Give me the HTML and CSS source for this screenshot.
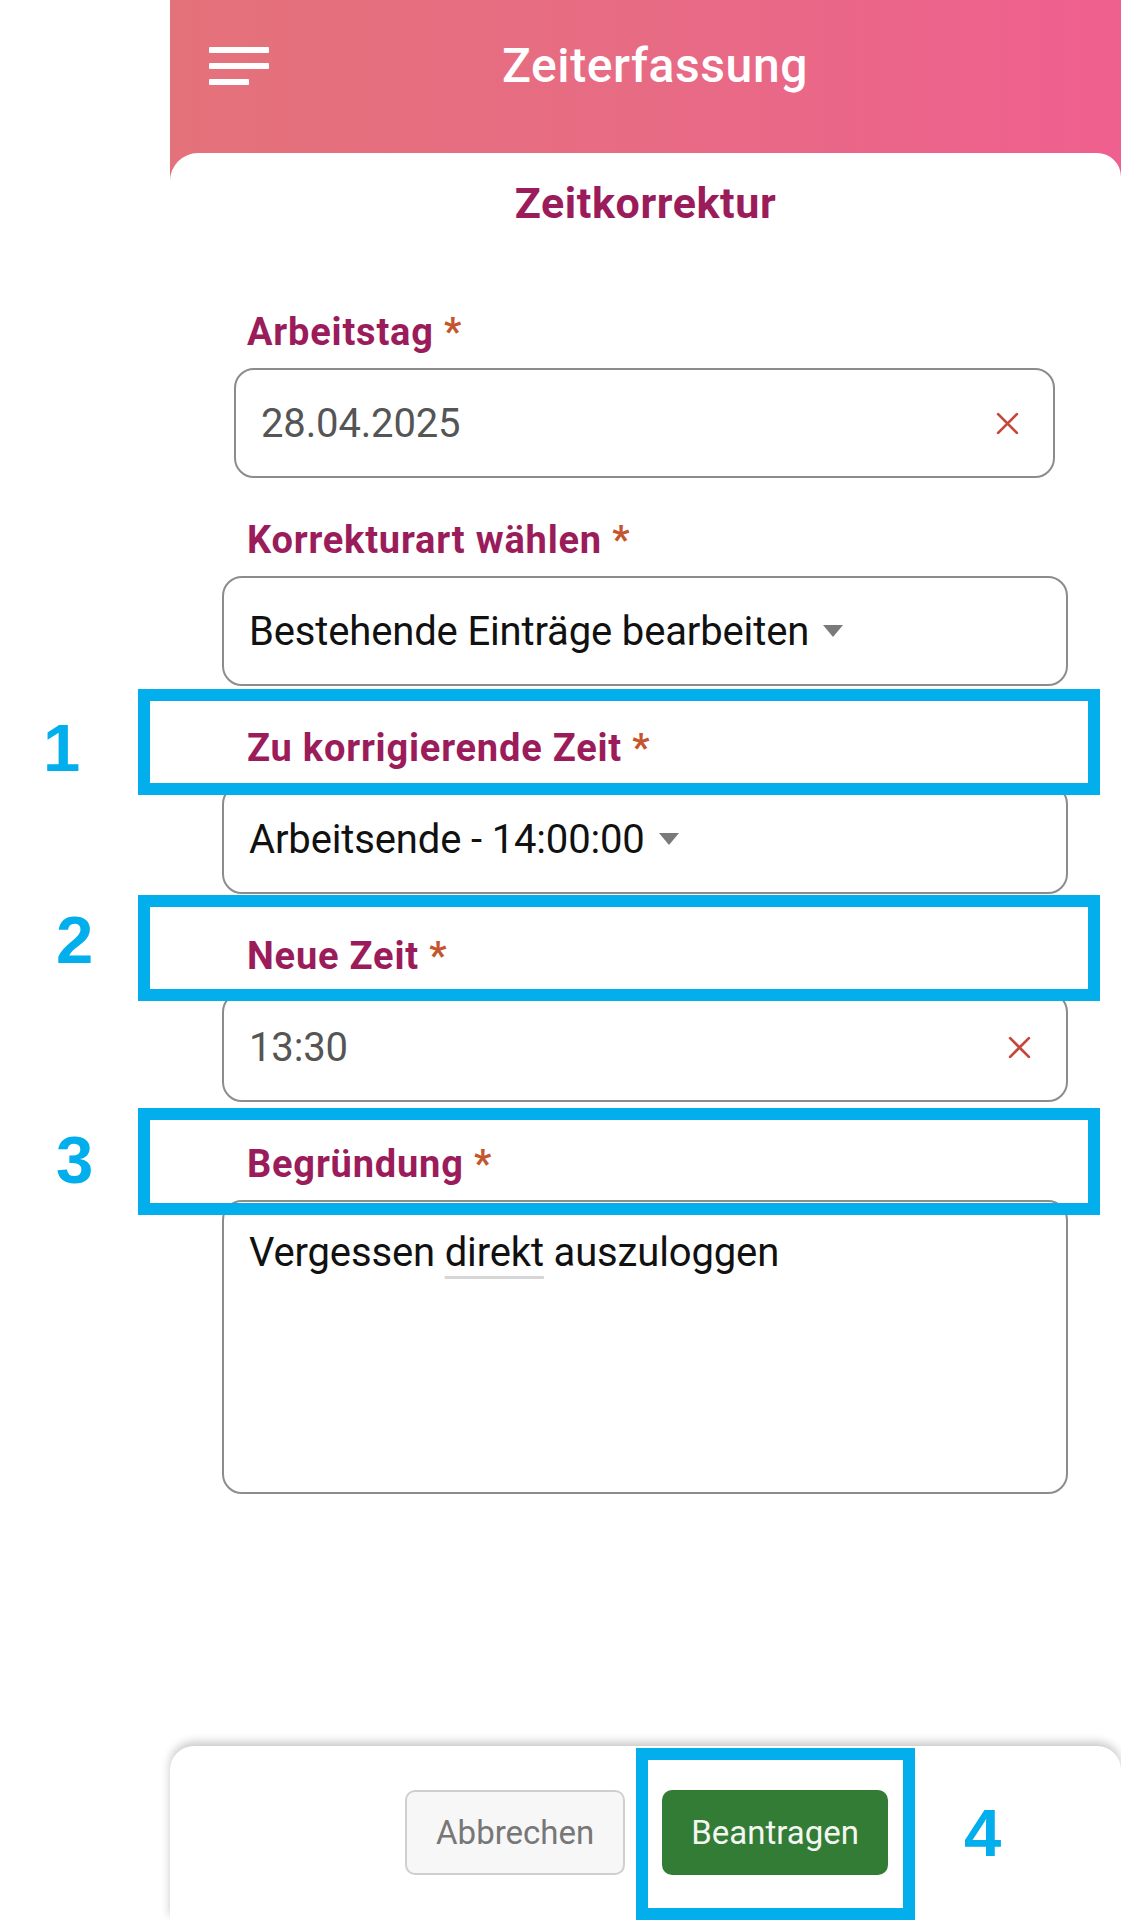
FILE: index.html
```html
<!DOCTYPE html>
<html lang="de">
<head>
<meta charset="utf-8">
<title>Zeitkorrektur</title>
<link rel="stylesheet" href="styles.css">
</head>
<body>
<div class="page">
  <div class="app">
    <header class="topbar">
      <div class="menu" aria-label="Menü"><span></span><span></span><span class="short"></span></div>
      <h1 class="app-title">Zeiterfassung</h1>
    </header>
    <main class="card">
      <h2 class="card-title">Zeitkorrektur</h2>
      <form class="form">
        <div class="field">
          <label class="label">Arbeitstag <span class="req">*</span></label>
          <div class="control narrow">
            <span class="value muted">28.04.2025</span>
            <svg class="clear" viewBox="0 0 24 24" width="25" height="25"><path d="M3 3 L21 21 M21 3 L3 21" stroke="#c4473a" stroke-width="2.6" stroke-linecap="round" fill="none"/></svg>
          </div>
        </div>
        <div class="field">
          <label class="label">Korrekturart wählen <span class="req">*</span></label>
          <div class="control">
            <span class="value">Bestehende Einträge bearbeiten</span>
            <span class="caret"></span>
          </div>
        </div>
        <div class="field">
          <label class="label">Zu korrigierende Zeit <span class="req">*</span></label>
          <div class="control">
            <span class="value">Arbeitsende - 14:00:00</span>
            <span class="caret"></span>
          </div>
        </div>
        <div class="field">
          <label class="label">Neue Zeit <span class="req">*</span></label>
          <div class="control">
            <span class="value muted">13:30</span>
            <svg class="clear" viewBox="0 0 24 24" width="25" height="25"><path d="M3 3 L21 21 M21 3 L3 21" stroke="#c4473a" stroke-width="2.6" stroke-linecap="round" fill="none"/></svg>
          </div>
        </div>
        <div class="field">
          <label class="label">Begründung <span class="req">*</span></label>
          <div class="control area">
            <span class="value">Vergessen <span class="spell">direkt</span> auszuloggen</span>
          </div>
        </div>
      </form>
    </main>
    <footer class="actions">
      <button class="btn secondary" type="button">Abbrechen</button>
      <button class="btn primary" type="button">Beantragen</button>
    </footer>
  </div>

  <div class="mark mark-1"></div>
  <div class="mark mark-2"></div>
  <div class="mark mark-3"></div>
  <div class="mark mark-4"></div>
  <span class="num num-1">1</span>
  <span class="num num-2">2</span>
  <span class="num num-3">3</span>
  <span class="num num-4">4</span>
</div>
</body>
</html>
```
FILE: styles.css
```css
* { box-sizing: border-box; }
html, body { margin: 0; padding: 0; background: #fff; }
body { font-family: Roboto, "Noto Sans", sans-serif; }

.page {
  position: relative;
  width: 1121px;
  height: 1920px;
  overflow: hidden;
  background: #fff;
}

.app {
  margin-left: 170px;
  width: 951px;
  height: 1920px;
  display: flex;
  flex-direction: column;
  background: linear-gradient(90deg, #e4727a 0%, #e86a85 55%, #ef5f8f 100%) no-repeat;
  background-size: 100% 220px;
}

/* header */
.topbar {
  height: 153px;
  flex: none;
  display: flex;
  align-items: flex-start;
  padding-left: 39px;
  padding-right: 80px;
}
.menu {
  margin-top: 47px;
  width: 60px;
  display: flex;
  flex-direction: column;
  gap: 10px;
}
.menu span {
  display: block;
  height: 6px;
  width: 60px;
  background: #fff;
  border-radius: 1px;
}
.menu span.short { width: 40px; }
.app-title {
  flex: 1;
  margin: 38px 0 0;
  text-align: center;
  color: #fff;
  font-size: 48px;
  line-height: 56px;
  font-weight: 500;
  letter-spacing: 0.6px;
}

/* card */
.card {
  flex: 1;
  background: #fff;
  border-radius: 28px 24px 0 0;
  padding-top: 24px;
}
.card-title {
  margin: 0;
  text-align: center;
  color: #9b1c5a;
  font-size: 43px;
  line-height: 52px;
  font-weight: 700;
  letter-spacing: 0.6px;
}

.form {
  margin-top: 79px;
  display: flex;
  flex-direction: column;
  gap: 38px;
}
.field { display: flex; flex-direction: column; }
.label {
  padding-left: 77px;
  margin-bottom: 12px;
  font-size: 38px;
  line-height: 48px;
  font-weight: 700;
  color: #9b1c5a;
  letter-spacing: 0.8px;
}
.req { color: #c4552c; }

.control {
  margin-left: 52px;
  width: 846px;
  height: 110px;
  border: 2px solid #8c8c8c;
  border-radius: 20px;
  display: flex;
  align-items: center;
  padding: 0 34px 0 25px;
  font-size: 40px;
  letter-spacing: -0.15px;
  color: #111;
}
.control.narrow {
  margin-left: 64px;
  width: 821px;
  padding-right: 33px;
}
.value { white-space: nowrap; }
.value.muted { color: #555; }
.clear { margin-left: auto; flex: none; }
.caret {
  margin-left: 14px;
  width: 0;
  height: 0;
  border-left: 10px solid transparent;
  border-right: 10px solid transparent;
  border-top: 12px solid #7a7a7a;
}
.control.area {
  height: 294px;
  align-items: flex-start;
  padding-top: 27px;
  line-height: 48px;
}
.spell {
  text-decoration: underline;
  text-decoration-color: #d6d6d6;
  text-decoration-thickness: 3px;
  text-underline-offset: 10px;
}

/* footer */
.actions {
  flex: none;
  height: 174px;
  background: #fff;
  border-radius: 24px 24px 0 0;
  box-shadow: 0 -4px 10px rgba(0, 0, 0, 0.22);
  display: flex;
  justify-content: flex-end;
  align-items: flex-start;
  gap: 37px;
  padding: 44px 233px 0 0;
  position: relative;
}
.btn {
  height: 85px;
  border-radius: 10px;
  font-family: Roboto, "Noto Sans", sans-serif;
  font-size: 33px;
  padding: 0 27px;
  cursor: pointer;
}
.btn.secondary {
  background: #f7f7f7;
  border: 2px solid #cfcfcf;
  color: #777;
  padding: 0 29px;
}
.btn.primary {
  background: #327c35;
  border: 2px solid #327c35;
  color: #f3f6f1;
}

/* annotations */
.mark {
  position: absolute;
  border: 12px solid #02aeec;
  left: 138px;
  width: 962px;
}
.mark-1 { top: 689px; height: 106px; }
.mark-2 { top: 895px; height: 106px; }
.mark-3 { top: 1108px; height: 107px; }
.mark-4 { left: 636px; top: 1748px; width: 279px; height: 172px; }

.num {
  position: absolute;
  font-family: "Liberation Sans", Arial, sans-serif;
  font-weight: 700;
  font-size: 67px;
  line-height: 67px;
  color: #02aeec;
}
.num-1 { left: 43px; top: 714px; }
.num-2 { left: 56px; top: 906px; }
.num-3 { left: 56px; top: 1126px; }
.num-4 { left: 964px; top: 1799px; }
```
